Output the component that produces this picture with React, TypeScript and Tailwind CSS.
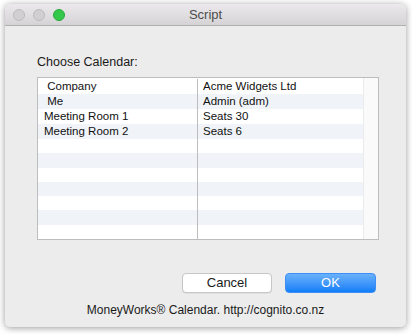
import React from "react";

const rows = [
  [" Company", "Acme Widgets Ltd"],
  [" Me", "Admin (adm)"],
  ["Meeting Room 1", "Seats 30"],
  ["Meeting Room 2", "Seats 6"],
  ["", ""], ["", ""], ["", ""], ["", ""], ["", ""], ["", ""], ["", ""],
];

export default function App() {
  return (
    <div
      className="w-[412px] h-[334px] bg-white pt-[4px] pl-[5px]"
      style={{ fontFamily: '"Liberation Sans", Arial, sans-serif' }}
    >
      <div className="w-[401px] h-[323px] rounded-[5px] bg-[#ececec] shadow-[0_1px_7px_rgba(0,0,0,0.4)] flex flex-col overflow-hidden">
        {/* Title bar */}
        <div className="h-[22px] shrink-0 relative flex items-center justify-center bg-gradient-to-b from-[#ebe9eb] to-[#d5d3d5] border-b border-[#b1afb1] rounded-t-[5px]">
          <div className="absolute left-[8px] top-[5px] flex gap-[8px]">
            <div className="w-[12px] h-[12px] rounded-full bg-[#d1cfd1] border border-[#bdbbbd]" />
            <div className="w-[12px] h-[12px] rounded-full bg-[#d1cfd1] border border-[#bdbbbd]" />
            <div className="w-[12px] h-[12px] rounded-full bg-[#34c84a] border border-[#2aa83b]" />
          </div>
          <span className="text-[13px] text-[#4d4d4d] leading-none">Script</span>
        </div>

        {/* Content */}
        <div className="pl-[32px] flex flex-col">
          <div className="mt-[28px] h-[16px] leading-[16px] text-[12.5px] text-[#1a1a1a]">Choose Calendar:</div>
          <div className="mt-[7px] w-[342px] h-[163px] border border-[#bdbdbd] bg-white flex">
            <div className="flex-1 pt-[1px] flex flex-col">
              {rows.map((r, i) => (
                <div
                  key={i}
                  className={`h-[15px] flex text-[11.5px] leading-[15px] text-[#111] ${i % 2 === 1 ? "bg-[#f0f4f9]" : "bg-white"}`}
                >
                  <div className="w-[160px] pl-[6px] border-r border-[#bdbdbd] whitespace-pre">{r[0]}</div>
                  <div className="flex-1 pl-[5px] whitespace-pre">{r[1]}</div>
                </div>
              ))}
            </div>
            <div className="w-[15px] bg-[#fafafa] border-l border-[#ebebeb]" />
          </div>

          <div className="mt-[33px] pr-[30px] flex justify-end gap-[13px]">
            <div className="w-[90px] h-[20px] rounded-[4px] bg-white border border-[#c6c6c6] shadow-[0_0.5px_0.5px_rgba(0,0,0,0.1)] flex items-center justify-center text-[13px] text-[#1a1a1a]">
              Cancel
            </div>
            <div className="w-[91px] h-[20px] rounded-[4px] bg-gradient-to-b from-[#69b1fa] to-[#0c7ef8] border border-[#3d8ff5] flex items-center justify-center text-[13px] text-white">
              OK
            </div>
          </div>
        </div>
        <div className="mt-[9px] h-[16px] leading-[16px] text-center text-[12px] text-[#1a1a1a]">
          MoneyWorks® Calendar. http://cognito.co.nz
        </div>
      </div>
    </div>
  );
}
